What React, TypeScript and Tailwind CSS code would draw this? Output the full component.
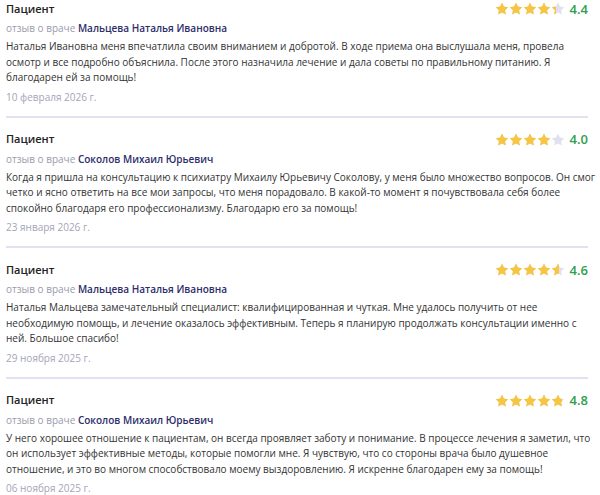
import React from "react";

interface IReview {
  doctor: string;
  rating: number;
  text: string;
  date: string;
}

const reviews: IReview[] = [
  {
    doctor: "Мальцева Наталья Ивановна",
    rating: 4.4,
    text: "Наталья Ивановна меня впечатлила своим вниманием и добротой. В ходе приема она выслушала меня, провела осмотр и все подробно объяснила. После этого назначила лечение и дала советы по правильному питанию. Я благодарен ей за помощь!",
    date: "10 февраля 2026 г.",
  },
  {
    doctor: "Соколов Михаил Юрьевич",
    rating: 4.0,
    text: "Когда я пришла на консультацию к психиатру Михаилу Юрьевичу Соколову, у меня было множество вопросов. Он смог четко и ясно ответить на все мои запросы, что меня порадовало. В какой-то момент я почувствовала себя более спокойно благодаря его профессионализму. Благодарю его за помощь!",
    date: "23 января 2026 г.",
  },
  {
    doctor: "Мальцева Наталья Ивановна",
    rating: 4.6,
    text: "Наталья Мальцева замечательный специалист: квалифицированная и чуткая. Мне удалось получить от нее необходимую помощь, и лечение оказалось эффективным. Теперь я планирую продолжать консультации именно с ней. Большое спасибо!",
    date: "29 ноября 2025 г.",
  },
  {
    doctor: "Соколов Михаил Юрьевич",
    rating: 4.8,
    text: "У него хорошее отношение к пациентам, он всегда проявляет заботу и понимание. В процессе лечения я заметил, что он использует эффективные методы, которые помогли мне. Я чувствую, что со стороны врача было душевное отношение, и это во многом способствовало моему выздоровлению. Я искренне благодарен ему за помощь!",
    date: "06 ноября 2025 г.",
  },
];

const STAR = "M12 1l3.3 6.9 7.5.9-5.5 5.2 1.4 7.5L12 17.8l-6.7 3.7 1.4-7.5L1.2 8.8l7.5-.9z";

const Star: React.FC<{ fill: number }> = ({ fill }) => (
  <span className="relative block w-[14px] h-[14px]">
    <svg viewBox="0 0 24 24" className="absolute inset-0 w-[14px] h-[14px]">
      <path d={STAR} fill="#e2e0f0" />
    </svg>
    <span className="absolute inset-y-0 left-0 overflow-hidden" style={{ width: `${fill * 100}%` }}>
      <svg viewBox="0 0 24 24" className="w-[14px] h-[14px]">
        <path d={STAR} fill="#f6c643" />
      </svg>
    </span>
  </span>
);

const Rating: React.FC<{ value: number }> = ({ value }) => (
  <div className="flex items-center">
    <div className="flex items-center">
      {[0, 1, 2, 3, 4].map((i) => (
        <Star key={i} fill={Math.max(0, Math.min(1, value - i))} />
      ))}
    </div>
    <span className="ml-[5px] text-[13px] font-semibold text-[#2fa04e] leading-none">{value.toFixed(1)}</span>
  </div>
);

const ReviewCard: React.FC<{ review: IReview; first: boolean; last: boolean }> = ({ review, first, last }) => (
  <div className={`pt-[13px] pb-[11px] ${first ? "-mt-[13px]" : ""} ${last ? "" : "border-b-2 border-[#e3e1f1]"}`}>
    <div className="flex items-center justify-between h-[18px]">
      <span className="text-[11px] font-semibold text-[#222]">Пациент</span>
      <Rating value={review.rating} />
    </div>
    <div className="mt-[2px] text-[10px] leading-[16px]">
      <span className="text-[#9b9aab]">отзыв о враче </span>
      <span className="font-semibold text-[#2c2d6b]">{review.doctor}</span>
    </div>
    <p className="mt-[3px] -mr-[8px] text-[10px] leading-[15.5px] text-[#333]">{review.text}</p>
    <div className="mt-[3px] text-[10px] leading-[16px] text-[#a5a4ba]">{review.date}</div>
  </div>
);

const App: React.FC = () => {
  return (
    <div className="w-[600px] h-[495px] overflow-hidden bg-white" style={{ fontFamily: "'Open Sans', sans-serif" }}>
      <div className="w-[582px] ml-[6px]">
        {reviews.map((r, i) => (
          <ReviewCard key={i} review={r} first={i === 0} last={i === reviews.length - 1} />
        ))}
      </div>
    </div>
  );
};

export default App;
